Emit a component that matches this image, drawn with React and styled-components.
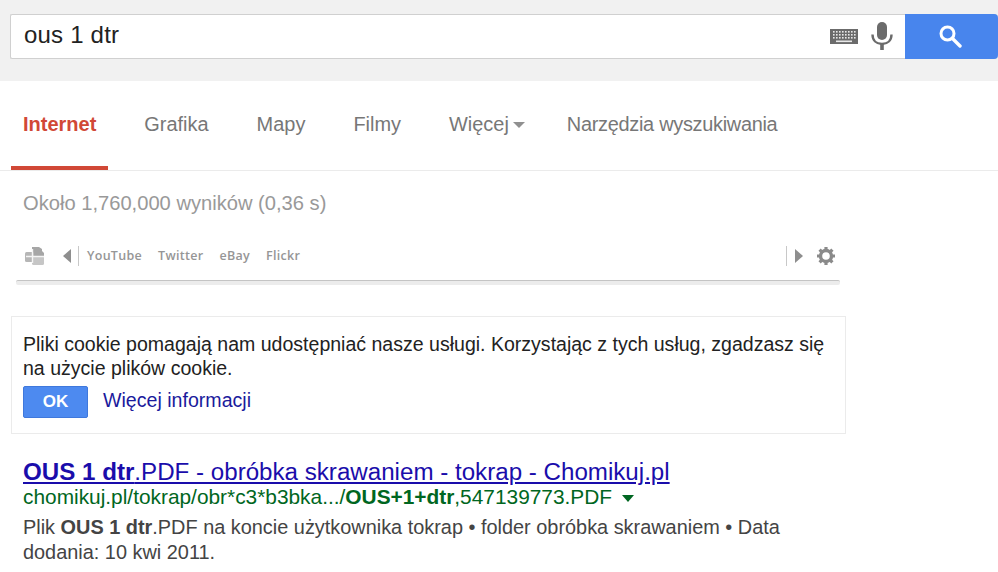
import styled, { createGlobalStyle } from 'styled-components';

const GlobalStyle = createGlobalStyle`
  html, body {
    margin: 0;
    padding: 0;
    background: #fff;
    overflow: hidden;
    font-family: "Liberation Sans", Arial, sans-serif;
  }
`;

const TABS = ['Grafika', 'Mapy', 'Filmy'];
const BOOKMARKS = ['YouTube', 'Twitter', 'eBay', 'Flickr'];

const KeyboardIcon = () => (
  <svg width="28" height="15" viewBox="0 0 28 15">
    <rect width="28" height="15" fill="#6b6b6b" />
    <g fill="#e8e8e8">
      {[3, 6, 9].map((y) =>
        [3, 6, 9, 12, 15, 18, 21, 24].map((x) => (
          <rect key={`${x}-${y}`} x={x} y={y - 1} width="1.6" height="1.6" />
        ))
      )}
      <rect x="6" y="11.500" width="16" height="1.600" />
    </g>
  </svg>
);

const MicIcon = () => (
  <svg width="22" height="28" viewBox="0 0 22 28">
    <rect x="6" y="0" width="10" height="18" rx="5" fill="#6b6b6b" />
    <path d="M1.500 12.500c0 6 4 9.500 9.500 9.500s9.500-3.500 9.500-9.500" fill="none" stroke="#6b6b6b" strokeWidth="2.400" />
    <rect x="9.200" y="21" width="3.600" height="7" fill="#6b6b6b" />
  </svg>
);

const SearchIcon = () => (
  <svg width="24" height="24" viewBox="0 0 24 24">
    <circle cx="9.500" cy="9.500" r="6.500" fill="none" stroke="#fff" strokeWidth="3" />
    <path d="M14.500 14.500L22 22" stroke="#fff" strokeWidth="3.400" strokeLinecap="round" />
  </svg>
);

const CubesIcon = () => (
  <svg width="21" height="20" viewBox="0 0 21 20">
    <path d="M8 1h7l3 2v2l2 2v4H8z" fill="#a6a6a6" />
    <rect x="1" y="6" width="9" height="10" rx="1.500" fill="#b6b6b6" />
    <rect x="8" y="10" width="12" height="9" rx="1.500" fill="#c6c6c6" />
    <path d="M8.500 3v14M2 10.500h18" stroke="#f4f4f4" strokeWidth="1.400" fill="none" />
  </svg>
);

const GearIcon = () => (
  <svg width="20" height="20" viewBox="0 0 20 20">
    <circle cx="10" cy="10" r="5.500" fill="none" stroke="#8a8a8a" strokeWidth="3.400" />
    <g stroke="#8a8a8a" strokeWidth="3.200">
      <path d="M10 1v3M10 16v3M1 10h3M16 10h3M3.600 3.600l2.200 2.200M14.200 14.200l2.200 2.200M3.600 16.400l2.200-2.200M14.200 5.800l2.200-2.200" />
    </g>
  </svg>
);

export default function App() {
  return (
    <Page>
      <GlobalStyle />
      <SearchBar>
        <SearchBox>
          <Query>ous 1 dtr</Query>
          <KeyboardIcon />
          <MicSlot>
            <MicIcon />
          </MicSlot>
          <SearchButton>
            <SearchIcon />
          </SearchButton>
        </SearchBox>
      </SearchBar>

      <TabBar>
        <Tab $active>Internet</Tab>
        {TABS.map((t) => (
          <Tab key={t}>{t}</Tab>
        ))}
        <Tab>
          Więcej
          <MoreArrow />
        </Tab>
        <ToolsTab>Narzędzia wyszukiwania</ToolsTab>
      </TabBar>

      <Stats>Około 1,760,000 wyników (0,36 s)</Stats>

      <Toolbar>
        <ToolbarRow>
          <CubesIcon />
          <ArrowLeft />
          <Divider />
          <Bookmarks>
            {BOOKMARKS.map((b) => (
              <Bookmark key={b}>{b}</Bookmark>
            ))}
          </Bookmarks>
          <Divider />
          <ArrowRight />
          <GearSlot>
            <GearIcon />
          </GearSlot>
        </ToolbarRow>
        <ToolbarEdge />
      </Toolbar>

      <CookieBox>
        <CookieText>
          Pliki cookie pomagają nam udostępniać nasze usługi. Korzystając z tych usług, zgadzasz się na użycie plików cookie.
        </CookieText>
        <CookieActions>
          <OkButton>OK</OkButton>
          <MoreLink>Więcej informacji</MoreLink>
        </CookieActions>
      </CookieBox>

      <Result>
        <ResultTitle>
          <b>OUS 1 dtr</b>.PDF - obróbka skrawaniem - tokrap - Chomikuj.pl
        </ResultTitle>
        <ResultUrl>
          chomikuj.pl/tokrap/obr*c3*b3bka.../<b>OUS+1+dtr</b>,547139773.PDF
          <UrlArrow />
        </ResultUrl>
        <Snippet>
          Plik <b>OUS 1 dtr</b>.PDF na koncie użytkownika tokrap • folder obróbka skrawaniem • Data dodania: 10 kwi 2011.
        </Snippet>
      </Result>
    </Page>
  );
}

const Page = styled.div`
  width: 998px;
  height: 572px;
  overflow: hidden;
  background: #fff;
`;

const SearchBar = styled.div`
  height: 81px;
  box-sizing: border-box;
  padding: 14px 0 0 10px;
  background: #f1f1f1;
`;

const SearchBox = styled.div`
  display: flex;
  align-items: center;
  width: 988px;
  height: 45px;
  box-sizing: border-box;
  background: #fff;
  border: 1px solid #d0d0d0;
  border-right: 0;
  border-radius: 2px 4px 4px 2px;
`;

const Query = styled.div`
  flex: 1;
  padding: 0 0 3px 13px;
  font-size: 24px;
  letter-spacing: 0.2px;
  color: #222;
`;

const MicSlot = styled.div`
  display: flex;
  margin: -2px 12px 0 13px;
`;

const SearchButton = styled.div`
  display: flex;
  align-items: center;
  justify-content: center;
  width: 93px;
  height: 45px;
  margin: -1px 0;
  padding-right: 3px;
  padding-bottom: 2px;
  box-sizing: border-box;
  background: #4885ed;
  border-radius: 0 4px 4px 0;
`;

const TabBar = styled.div`
  display: flex;
  height: 90px;
  box-sizing: border-box;
  padding-left: 11px;
  border-bottom: 1px solid #ebebeb;
`;

const Tab = styled.div`
  display: flex;
  align-items: center;
  height: 89px;
  box-sizing: border-box;
  padding: ${(p) => (p.$active ? '2px 12px 0' : '0 12px 2px')};
  margin-right: 24px;
  font-size: ${(p) => (p.$active ? '20px' : '19.950px')};
  font-weight: ${(p) => (p.$active ? 700 : 400)};
  color: ${(p) => (p.$active ? '#d14836' : '#777')};
  border-bottom: ${(p) => (p.$active ? '4px solid #d14836' : '0')};
`;

const ToolsTab = styled(Tab)`
  letter-spacing: -0.3px;
`;

const MoreArrow = styled.span`
  margin: 0 -6px 0 4px;
  border-left: 6px solid transparent;
  border-right: 6px solid transparent;
  border-top: 6px solid #909090;
`;

const Stats = styled.div`
  padding: 22px 0 0 23px;
  font-size: 20.150px;
  line-height: 21px;
  color: #999;
`;

const Toolbar = styled.div`
  width: 824px;
  margin: 27px 0 0 16px;
`;

const ToolbarRow = styled.div`
  display: flex;
  align-items: center;
  height: 30px;
  padding-left: 8px;
`;

const ArrowLeft = styled.span`
  margin: 0 7px 0 18px;
  border-top: 7px solid transparent;
  border-bottom: 7px solid transparent;
  border-right: 8px solid #8e8e8e;
`;

const ArrowRight = styled.span`
  margin-left: 8px;
  border-top: 7px solid transparent;
  border-bottom: 7px solid transparent;
  border-left: 8px solid #8e8e8e;
`;

const Divider = styled.span`
  width: 1px;
  height: 20px;
  background: #c8c8c8;
`;

const Bookmarks = styled.div`
  flex: 1;
  display: flex;
  gap: 16px;
  padding: 0 0 2px 8px;
`;

const Bookmark = styled.span`
  font-family: "Open Sans", sans-serif;
  font-size: 12.500px;
  font-weight: 600;
  letter-spacing: 0.3px;
  color: #969696;
`;

const GearSlot = styled.div`
  display: flex;
  margin: 0 4px 0 13px;
`;

const ToolbarEdge = styled.div`
  height: 5px;
  margin-top: 9px;
  box-sizing: border-box;
  background: #ececec;
  border-top: 1px solid #c4c4c4;
  border-radius: 2px;
`;

const CookieBox = styled.div`
  width: 835px;
  height: 118px;
  box-sizing: border-box;
  margin: 31px 0 0 11px;
  padding: 15px 11px 0;
  border: 1px solid #ebebeb;
`;

const CookieText = styled.div`
  font-size: 19.550px;
  line-height: 24px;
  color: #222;
`;

const CookieActions = styled.div`
  display: flex;
  align-items: center;
  margin-top: 6px;
`;

const OkButton = styled.div`
  display: flex;
  align-items: center;
  justify-content: center;
  width: 65px;
  height: 32px;
  padding-bottom: 1px;
  margin-right: 15px;
  background: #4d8af0;
  border: 1px solid #3f78dc;
  box-sizing: border-box;
  border-radius: 2px;
  font-size: 17px;
  font-weight: 700;
  color: #fff;
`;

const MoreLink = styled.a`
  padding-bottom: 3px;
  font-size: 19.600px;
  color: #1a1a9c;
`;

const Result = styled.div`
  padding: 25px 0 0 23px;
`;

const ResultTitle = styled.div`
  font-size: 24.150px;
  line-height: 26px;
  color: #1a0dab;
  text-decoration: underline;
`;

const ResultUrl = styled.div`
  font-size: 20.870px;
  line-height: 23px;
  color: #006621;
`;

const UrlArrow = styled.span`
  display: inline-block;
  margin-left: 10px;
  vertical-align: middle;
  border-left: 6px solid transparent;
  border-right: 6px solid transparent;
  border-top: 7px solid #006621;
`;

const Snippet = styled.div`
  width: 780px;
  padding-top: 7px;
  font-size: 19.900px;
  line-height: 25px;
  color: #444;
`;
